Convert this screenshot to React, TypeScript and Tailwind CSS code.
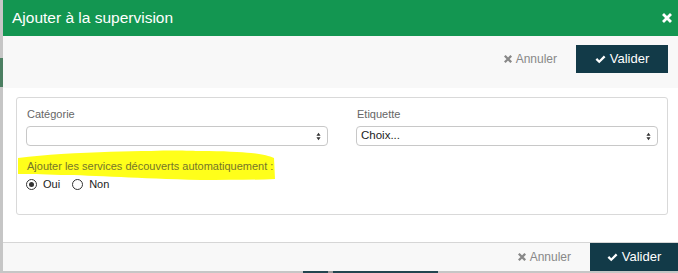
import React from 'react';

function TimesIcon({ className }: { className?: string }) {
    return (
        <svg viewBox="0 0 10 10" className={className} fill="none" stroke="currentColor" strokeWidth={2.8} strokeLinecap="square">
            <path d="M2 2 L8 8 M8 2 L2 8" />
        </svg>
    );
}

function CheckIcon({ className }: { className?: string }) {
    return (
        <svg viewBox="0 0 12 10" className={className} fill="currentColor">
            <path d="M0.5 5.2 L2.3 3.4 L4.6 5.7 L9.7 0.6 L11.5 2.4 L4.6 9.3 Z" />
        </svg>
    );
}

function SelectArrows() {
    return (
        <svg viewBox="0 0 6 10" className="w-[5px] h-[9px] text-[#333]" fill="currentColor">
            <path d="M3 0.5 L5.5 4 L0.5 4 Z M3 9.5 L0.5 6 L5.5 6 Z" />
        </svg>
    );
}

function Radio({ checked, label }: { checked?: boolean; label: string }) {
    return (
        <label className="flex items-center gap-[6px]">
            <span className="w-[11px] h-[11px] rounded-full border border-[#333] bg-white flex items-center justify-center">
                {checked && <span className="w-[5px] h-[5px] rounded-full bg-[#333]"></span>}
            </span>
            <span className="text-[11px] text-[#222]">{label}</span>
        </label>
    );
}

function Field({ label, value }: { label: string; value?: string }) {
    return (
        <div className="flex flex-col">
            <span className="text-[11px] leading-[16px] text-[#666] ml-[1px]">{label}</span>
            <div className="mt-[4px] h-[20px] border border-[#c8c8c8] rounded-[4px] bg-white flex items-center justify-between pl-[4px] pr-[6px]">
                <span className="text-[11.5px] text-[#222]">{value}</span>
                <SelectArrows />
            </div>
        </div>
    );
}

export default function App() {
    return (
        <div className="w-[678px] h-[273px] flex bg-[#c4c4c4] overflow-hidden font-['Liberation_Sans',Arial,sans-serif]">
            {/* bord gauche de la page derriere */}
            <div className="w-[3px] flex flex-col">
                <div className="h-[58px] bg-[#c6c6c6]"></div>
                <div className="h-[29px] bg-[#4c7f62]"></div>
                <div className="flex-1 bg-[#c6c6c6]"></div>
            </div>

            <div className="flex-1 flex flex-col">
                {/* Header */}
                <div className="h-[36px] bg-[#139651] flex items-center justify-between pl-[9px] pr-[6px]">
                    <span className="text-white text-[15.5px]">Ajouter à la supervision</span>
                    <TimesIcon className="w-[10px] h-[10px] text-white" />
                </div>

                {/* Barre d'actions */}
                <div className="h-[52px] bg-[#f8f8f8] flex items-start justify-end pt-[9px] pr-[10px]">
                    <button className="h-[28px] flex items-center gap-[4px] text-[12px] text-[#888] mr-[19px]">
                        <TimesIcon className="w-[8px] h-[8px] text-[#888]" />
                        Annuler
                    </button>
                    <button className="h-[28px] w-[92px] bg-[#123a48] text-white text-[13px] flex items-center justify-center gap-[4px]">
                        <CheckIcon className="w-[11px] h-[9px]" />
                        Valider
                    </button>
                </div>

                {/* Contenu */}
                <div className="h-[154px] bg-white pt-[9px] pl-[13px] pr-[10px]">
                    <div className="relative h-[118px] border border-[#d9d9d9] rounded-[3px] px-[9px] pt-[8px]">
                        <svg className="absolute left-0 top-0 w-[270px] h-[90px]" viewBox="0 0 270 90">
                            <path
                                d="M1 60 C15 58 30 57 44 56 C80 54 110 53 134 53 C160 52 175 53 184 53 C205 53 225 54 234 55 C245 56 252 58 257 60 L258 81 C235 82 210 82 184 82 C150 81 125 80 104 79 C80 78 60 77 44 77 C25 76 10 76 1 76 Z"
                                fill="#ffff1a"
                            />
                        </svg>
                        <div className="relative grid grid-cols-2 gap-x-[28px]">
                            <Field label="Catégorie" />
                            <Field label="Etiquette" value="Choix..." />
                        </div>
                        <div className="relative mt-[12px] text-[11px] leading-[16px] text-[#75752a] ml-[1px]">
                            Ajouter les services découverts automatiquement :
                        </div>
                        <div className="relative mt-[2px] flex items-center gap-[12px]">
                            <Radio checked label="Oui" />
                            <Radio label="Non" />
                        </div>
                    </div>
                </div>

                {/* Pied */}
                <div className="h-[29px] bg-[#f8f8f8] border-t border-[#d6d6d6] flex items-stretch justify-end">
                    <button className="flex items-center gap-[4px] text-[12px] text-[#888] mr-[19px]">
                        <TimesIcon className="w-[8px] h-[8px] text-[#888]" />
                        Annuler
                    </button>
                    <button className="w-[88px] bg-[#123a48] text-white text-[13px] flex items-center justify-center gap-[4px]">
                        <CheckIcon className="w-[11px] h-[9px]" />
                        Valider
                    </button>
                </div>

                {/* bas de la page derriere */}
                <div className="h-[2px] flex">
                    <div className="w-[300px] bg-[#c6c6c6]"></div>
                    <div className="w-[25px] bg-[#234650]"></div>
                    <div className="w-[5px] bg-[#9a9a9a]"></div>
                    <div className="w-[105px] bg-[#234650]"></div>
                    <div className="flex-1 bg-[#c6c6c6]"></div>
                </div>
            </div>
        </div>
    );
}
